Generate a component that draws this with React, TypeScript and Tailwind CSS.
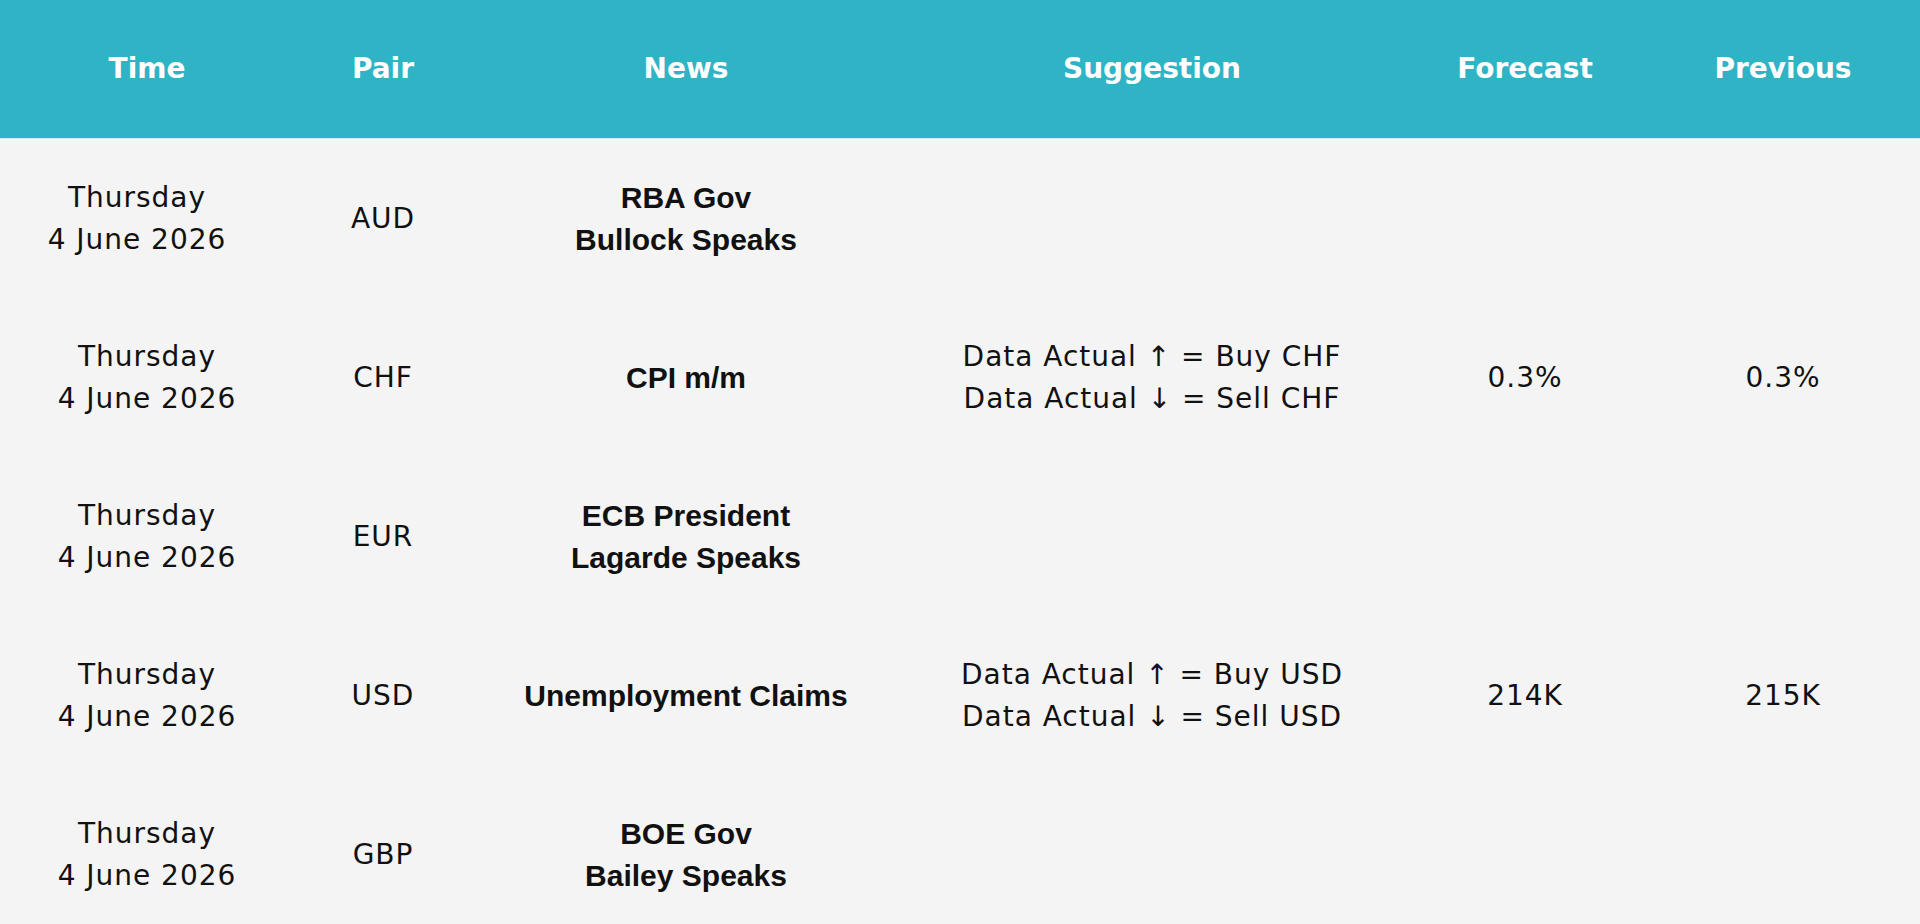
import React from 'react';

interface Evento {
  fecha: string[];
  par: string;
  noticia: string[];
  sugerencia: string[] | null;
  forecast: string;
  previous: string;
}

const eventos: Evento[] = [
  { fecha: ['Thursday', '4 June 2026'], par: 'AUD', noticia: ['RBA Gov', 'Bullock Speaks'], sugerencia: null, forecast: '', previous: '' },
  { fecha: ['Thursday', '4 June 2026'], par: 'CHF', noticia: ['CPI m/m'], sugerencia: ['Data Actual ↑ = Buy CHF', 'Data Actual ↓ = Sell CHF'], forecast: '0.3%', previous: '0.3%' },
  { fecha: ['Thursday', '4 June 2026'], par: 'EUR', noticia: ['ECB President', 'Lagarde Speaks'], sugerencia: null, forecast: '', previous: '' },
  { fecha: ['Thursday', '4 June 2026'], par: 'USD', noticia: ['Unemployment Claims'], sugerencia: ['Data Actual ↑ = Buy USD', 'Data Actual ↓ = Sell USD'], forecast: '214K', previous: '215K' },
  { fecha: ['Thursday', '4 June 2026'], par: 'GBP', noticia: ['BOE Gov', 'Bailey Speaks'], sugerencia: null, forecast: '', previous: '' },
];

const cols = 'grid grid-cols-[294px_178px_428px_504px_242px_274px]';
const cuerpo = "font-['DejaVu_Sans',sans-serif] text-[28px] tracking-[0.035em] leading-[42px] text-[#111]";

const App: React.FC = () => {
  return (
    <div className="w-[1920px] h-[924px] overflow-hidden bg-[#f4f4f4]">
      <div className={`${cols} h-[139px] bg-[#2eb4c4] border-b border-[#cdeef2] items-center text-white font-['DejaVu_Sans',sans-serif] font-bold text-[28px] text-center`}>
        <div>Time</div>
        <div>Pair</div>
        <div>News</div>
        <div>Suggestion</div>
        <div>Forecast</div>
        <div>Previous</div>
      </div>
      {eventos.map((ev, i) => (
        <div key={ev.par} className={`${cols} h-[159px] items-center text-center`}>
          <div className={`${cuerpo} ${i === 0 ? 'pr-5' : ''}`}>
            {ev.fecha.map(l => <div key={l}>{l}</div>)}
          </div>
          <div className={cuerpo}>{ev.par}</div>
          <div className="font-['Liberation_Sans',Arial,sans-serif] font-bold text-[30px] leading-[42px] text-[#111]">
            {ev.noticia.map(l => <div key={l}>{l}</div>)}
          </div>
          <div className={cuerpo}>
            {ev.sugerencia && ev.sugerencia.map(l => <div key={l}>{l}</div>)}
          </div>
          <div className={cuerpo}>{ev.forecast}</div>
          <div className={cuerpo}>{ev.previous}</div>
        </div>
      ))}
    </div>
  );
};

export default App;
